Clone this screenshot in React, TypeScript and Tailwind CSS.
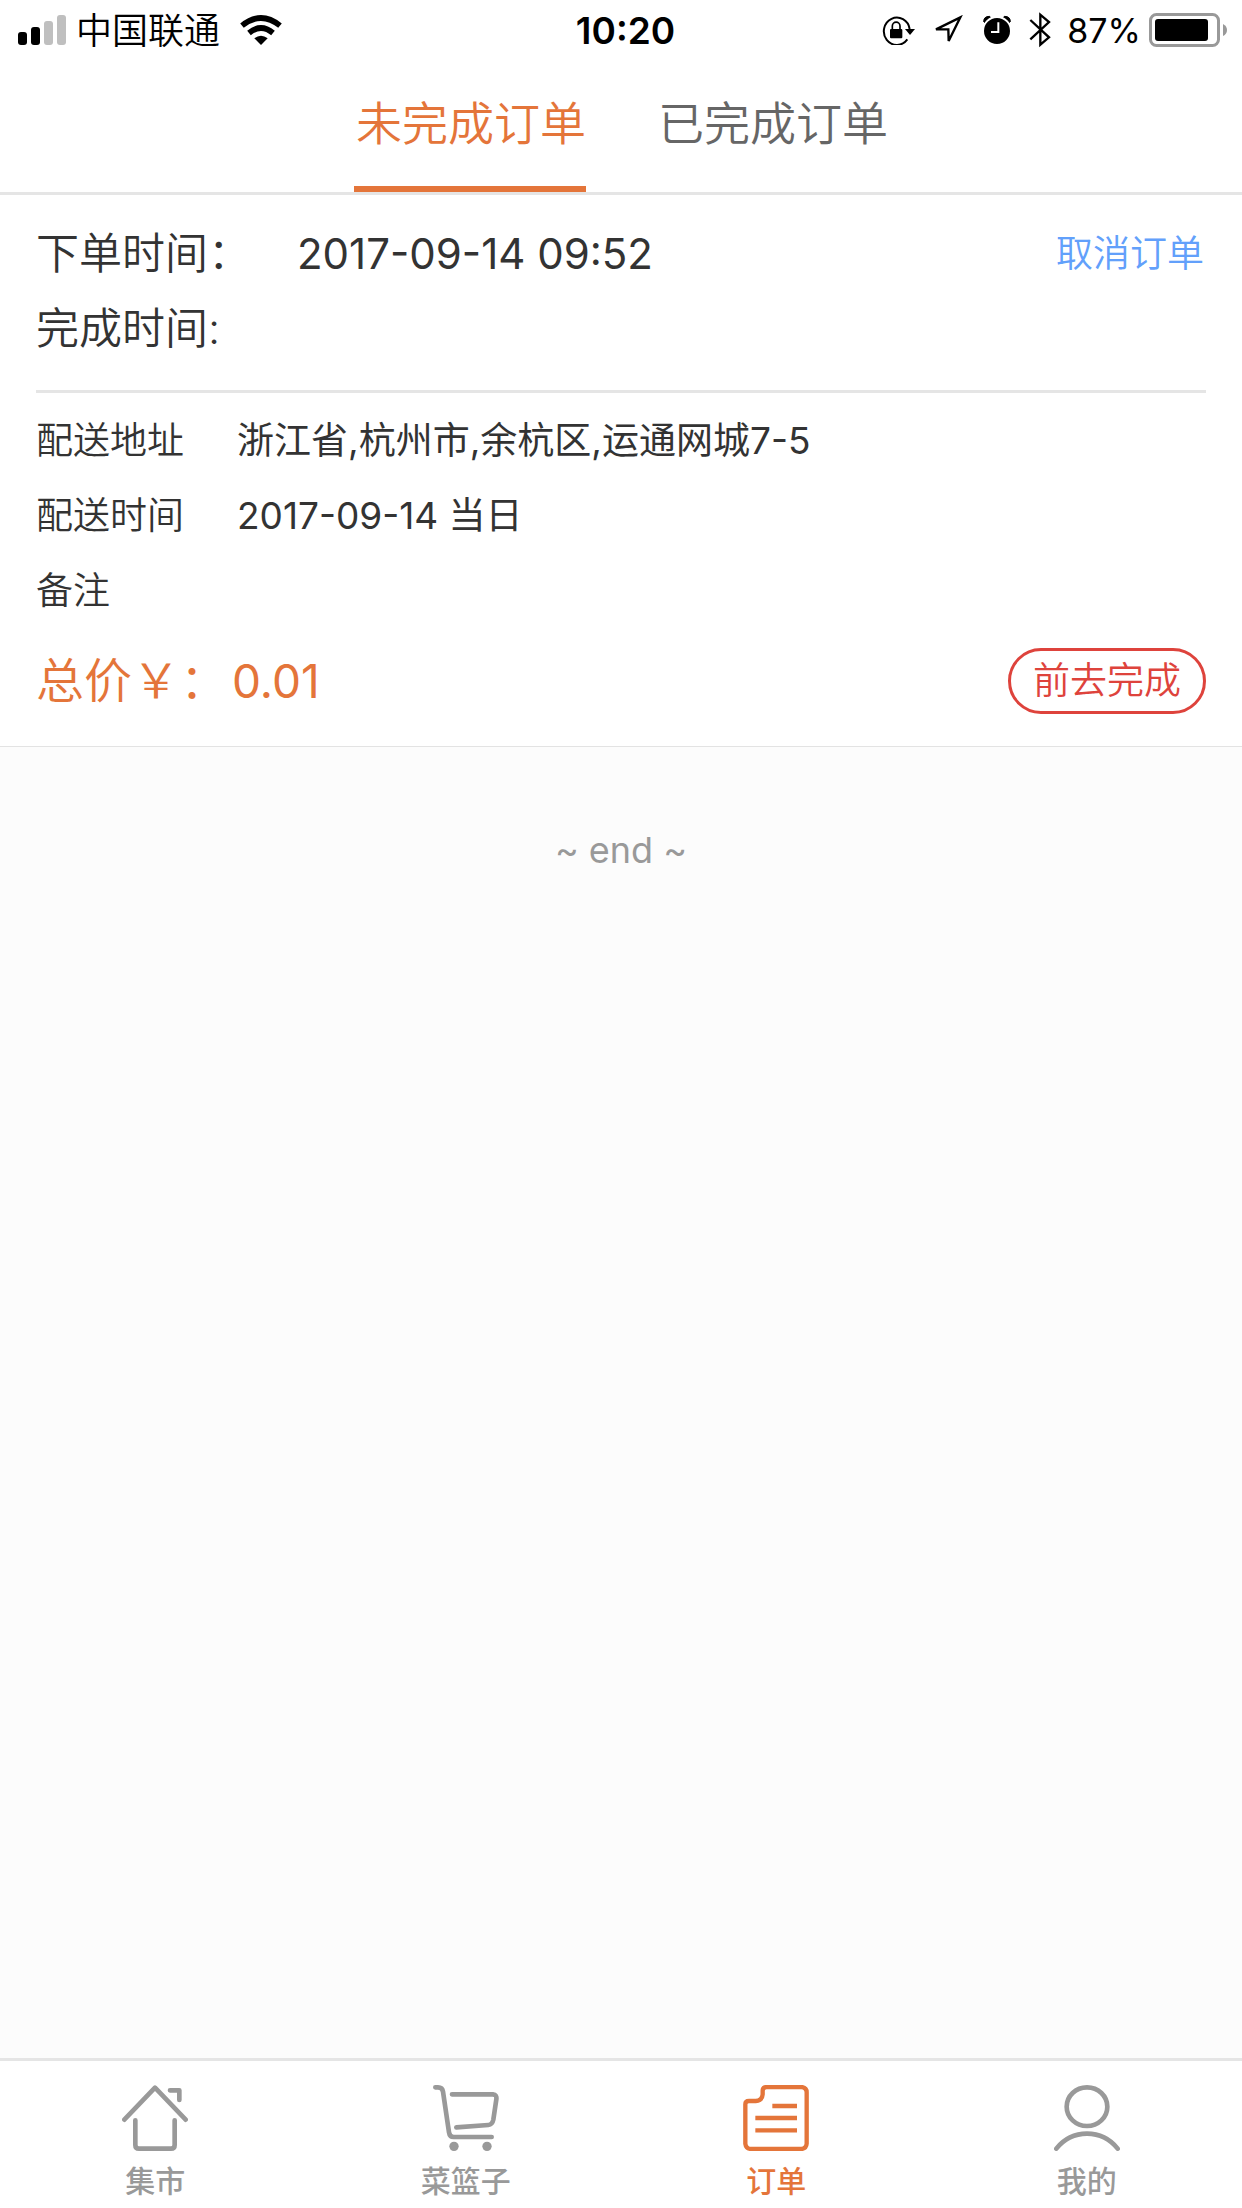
import { useState, type ReactNode } from 'react';
import clsx from 'clsx';

type OrderTab = 'pending' | 'finished';
type NavKey = 'market' | 'basket' | 'orders' | 'mine';

const orderTabs: { key: OrderTab; label: string }[] = [
  { key: 'pending', label: '未完成订单' },
  { key: 'finished', label: '已完成订单' },
];

const order = {
  createdAt: '2017-09-14 09:52',
  finishedAt: '',
  address: '浙江省,杭州市,余杭区,运通网城7-5',
  deliverAt: '2017-09-14 当日',
  remark: '',
  total: '0.01',
};

function StatusBar() {
  return (
    <div className="grid h-[60px] grid-cols-[1fr_auto_1fr] items-center pl-[18px] pr-[15px] text-black">
      <div className="flex items-center gap-[10px]">
        <svg className="h-[30px] w-12" viewBox="0 0 48 30">
          <rect x="0" y="17" width="9" height="13" rx="3" />
          <rect x="13" y="12" width="9" height="18" rx="3" />
          <rect x="26" y="6" width="9" height="24" rx="3" fill="#bfbfbf" />
          <rect x="39" y="0" width="9" height="30" rx="3" fill="#bfbfbf" />
        </svg>
        <span className="pt-[2px] text-[36px] font-[350] leading-[58px]">中国联通</span>
        <svg className="ml-[10px] h-[30px] w-[42px]" viewBox="0 0 126 90">
          <path d="M63 90 L43 70 Q63 54 83 70 Z" />
          <path d="M27 54 Q63 24 99 54" fill="none" stroke="#000" strokeWidth="17" />
          <path d="M6 32 Q63 -14 120 32" fill="none" stroke="#000" strokeWidth="17" />
        </svg>
      </div>
      <span className="pl-[6px] pt-[2px] text-[37px] font-semibold leading-[58px]">10:20</span>
      <div className="flex items-center justify-end">
        {/* rotation lock */}
        <svg className="h-[30px] w-[34px]" viewBox="0 0 102 90">
          <path d="M79 73 A39 41 0 1 1 86 42" fill="none" stroke="#000" strokeWidth="6" />
          <path d="M72 42 H102 L87 60 Z" />
          <rect x="27" y="42" width="37" height="28" rx="3" />
          <path d="M34 43 V33 a11 11 0 0 1 23 0 V43" fill="none" stroke="#000" strokeWidth="5" />
        </svg>
        <svg className="ml-[18px] h-[30px] w-[30px]" viewBox="0 0 90 90">
          <path d="M9 43 L82 7 L47 78 L46 43 Z" fill="none" stroke="#000" strokeWidth="7" />
        </svg>
        {/* alarm */}
        <svg className="ml-5 h-[30px] w-7" viewBox="0 0 84 90">
          <path
            d="M2 20 Q2 4 20 4 L24 10 L8 26 Z M82 20 Q82 4 64 4 L60 10 L76 26 Z"
            stroke="#000"
            strokeWidth="3"
            strokeLinejoin="round"
          />
          <circle cx="42" cy="48" r="42" stroke="#fff" strokeWidth="6" />
          <path d="M46 22 V51 H24" fill="none" stroke="#fff" strokeWidth="6" />
        </svg>
        {/* bluetooth */}
        <svg className="ml-[18px] h-9 w-[22px]" viewBox="0 0 66 108">
          <path d="M4 24 L60 76 L34 98 V8 L60 30 L4 82" fill="none" stroke="#000" strokeWidth="7" />
        </svg>
        <span className="ml-4 pt-[2px] text-[34px] leading-[58px]">87%</span>
        <svg className="ml-2 h-[34px] w-[78px]" viewBox="0 0 78 34">
          <rect x="1.5" y="1.5" width="68" height="31" rx="6" fill="none" stroke="#999" strokeWidth="3" />
          <rect x="6" y="6" width="53" height="22" rx="3" />
          <path d="M74 11 Q78 13 78 17 T74 23 Z" fill="#999" />
        </svg>
      </div>
    </div>
  );
}

function DetailRow({ label, children }: { label: string; children?: ReactNode }) {
  return (
    <div className="flex h-[75px] items-center">
      <dt className="w-[201px] shrink-0 text-[37px] font-[350]">{label}</dt>
      <dd className="min-w-0 text-[37px]">{children}</dd>
    </div>
  );
}

function OrderCard() {
  return (
    <section className="border-b border-[#e3e3e3] bg-white px-9 pt-[21px] text-[#333]">
      <dl className="border-b-[3px] border-[#e5e5e5] pb-6">
        <div className="flex h-[75px] items-center">
          <dt className="w-[261px] shrink-0 text-[43px] font-[350]">下单时间：</dt>
          <dd className="flex-1 text-[42px]">{order.createdAt}</dd>
          <button className="pr-[2px] text-[37px] font-[350] text-[#62a0fb]">取消订单</button>
        </div>
        <div className="flex h-[75px] items-center">
          <dt className="w-[261px] shrink-0 text-[43px] font-[350]">完成时间:</dt>
          <dd className="text-[42px]">{order.finishedAt}</dd>
        </div>
      </dl>
      <dl className="pt-[10px]">
        <DetailRow label="配送地址">{order.address}</DetailRow>
        <DetailRow label="配送时间">{order.deliverAt}</DetailRow>
        <DetailRow label="备注">{order.remark}</DetailRow>
      </dl>
      <div className="flex items-center justify-between pb-8 pt-5">
        <span className="text-[48px] font-[350] leading-[66px] text-[#e4753a]">
          总价￥：<span className="pl-1 text-[46px] font-normal">{order.total}</span>
        </span>
        <button className="h-[66px] w-[198px] rounded-full border-[3px] border-[#de433c] text-[37px] font-[350] leading-[60px] text-[#de433c]">
          前去完成
        </button>
      </div>
    </section>
  );
}

const navItems: { key: NavKey; label: string; icon: ReactNode }[] = [
  {
    key: 'market',
    label: '集市',
    icon: (
      <>
        <path d="M7 104 L99 8 L191 104" strokeWidth="14" />
        <path d="M144 16 H172 V45" strokeWidth="14" />
        <path d="M40 106 V180 Q40 191 51 191 H147 Q158 191 158 180 V106" strokeWidth="14" />
      </>
    ),
  },
  {
    key: 'basket',
    label: '菜篮子',
    icon: (
      <>
        <path d="M7 7 H15 Q28 7 30 20 L48 142 Q50 156 62 156 H176" strokeWidth="14" />
        <path d="M57 28 H180 Q192 29 190 43 L181 104 Q178 119 166 120 L70 127" strokeWidth="14" />
        <circle cx="63" cy="184" r="14" fill="currentColor" stroke="none" />
        <circle cx="162" cy="184" r="14" fill="currentColor" stroke="none" />
      </>
    ),
  },
  {
    key: 'orders',
    label: '订单',
    icon: (
      <>
        <path
          d="M70 6 H176 Q191 8 191 22 V176 Q190 190 176 192 H24 Q9 191 7 176 V58 Q7 48 18 48 H38 Q58 46 59 28 V17 Q59 7 70 6 Z"
          strokeWidth="13"
        />
        <path d="M88 63 H162 M37 99 H162 M37 136 H162" strokeWidth="13" strokeLinecap="butt" />
      </>
    ),
  },
  {
    key: 'mine',
    label: '我的',
    icon: (
      <>
        <ellipse cx="99" cy="65" rx="61" ry="58" strokeWidth="14" />
        <path d="M7 191 C55 131 143 131 191 191" strokeWidth="14" />
      </>
    ),
  },
];

export default function App() {
  const [tab, setTab] = useState<OrderTab>('pending');
  const [nav, setNav] = useState<NavKey>('orders');

  return (
    <div className="flex min-h-screen flex-col bg-[#fcfcfc] font-['Inter','Noto_Sans_CJK_SC',sans-serif]">
      <header className="border-b-[3px] border-[#e5e5e5] bg-white">
        <StatusBar />
        <div className="flex justify-center gap-[70px]">
          {orderTabs.map(t => (
            <button
              key={t.key}
              onClick={() => setTab(t.key)}
              className={clsx(
                'h-[132px] border-b-[6px] pl-[2px] text-[46px] font-[350] leading-[126px]',
                tab === t.key ? 'border-[#e4753a] text-[#e4753a]' : 'border-transparent text-[#666]'
              )}
            >
              {t.label}
            </button>
          ))}
        </div>
      </header>

      <main className="flex-1">
        {tab === 'pending' && <OrderCard />}
        <p className="pt-[76px] text-center text-[36px] leading-[54px] text-[#999]">~ end ~</p>
      </main>

      <nav className="grid grid-cols-4 border-t-[3px] border-[#e5e5e5] bg-white">
        {navItems.map(item => (
          <button
            key={item.key}
            onClick={() => setNav(item.key)}
            className={clsx(
              'flex h-[147px] flex-col items-center gap-2 pt-6 text-[30px] font-medium leading-[44px]',
              nav === item.key ? 'text-[#e4753a]' : 'text-[#999]'
            )}
          >
            <svg
              className="size-[66px]"
              viewBox="0 0 198 198"
              fill="none"
              stroke="currentColor"
              strokeLinecap="round"
              strokeLinejoin="round"
            >
              {item.icon}
            </svg>
            {item.label}
          </button>
        ))}
      </nav>
    </div>
  );
}
